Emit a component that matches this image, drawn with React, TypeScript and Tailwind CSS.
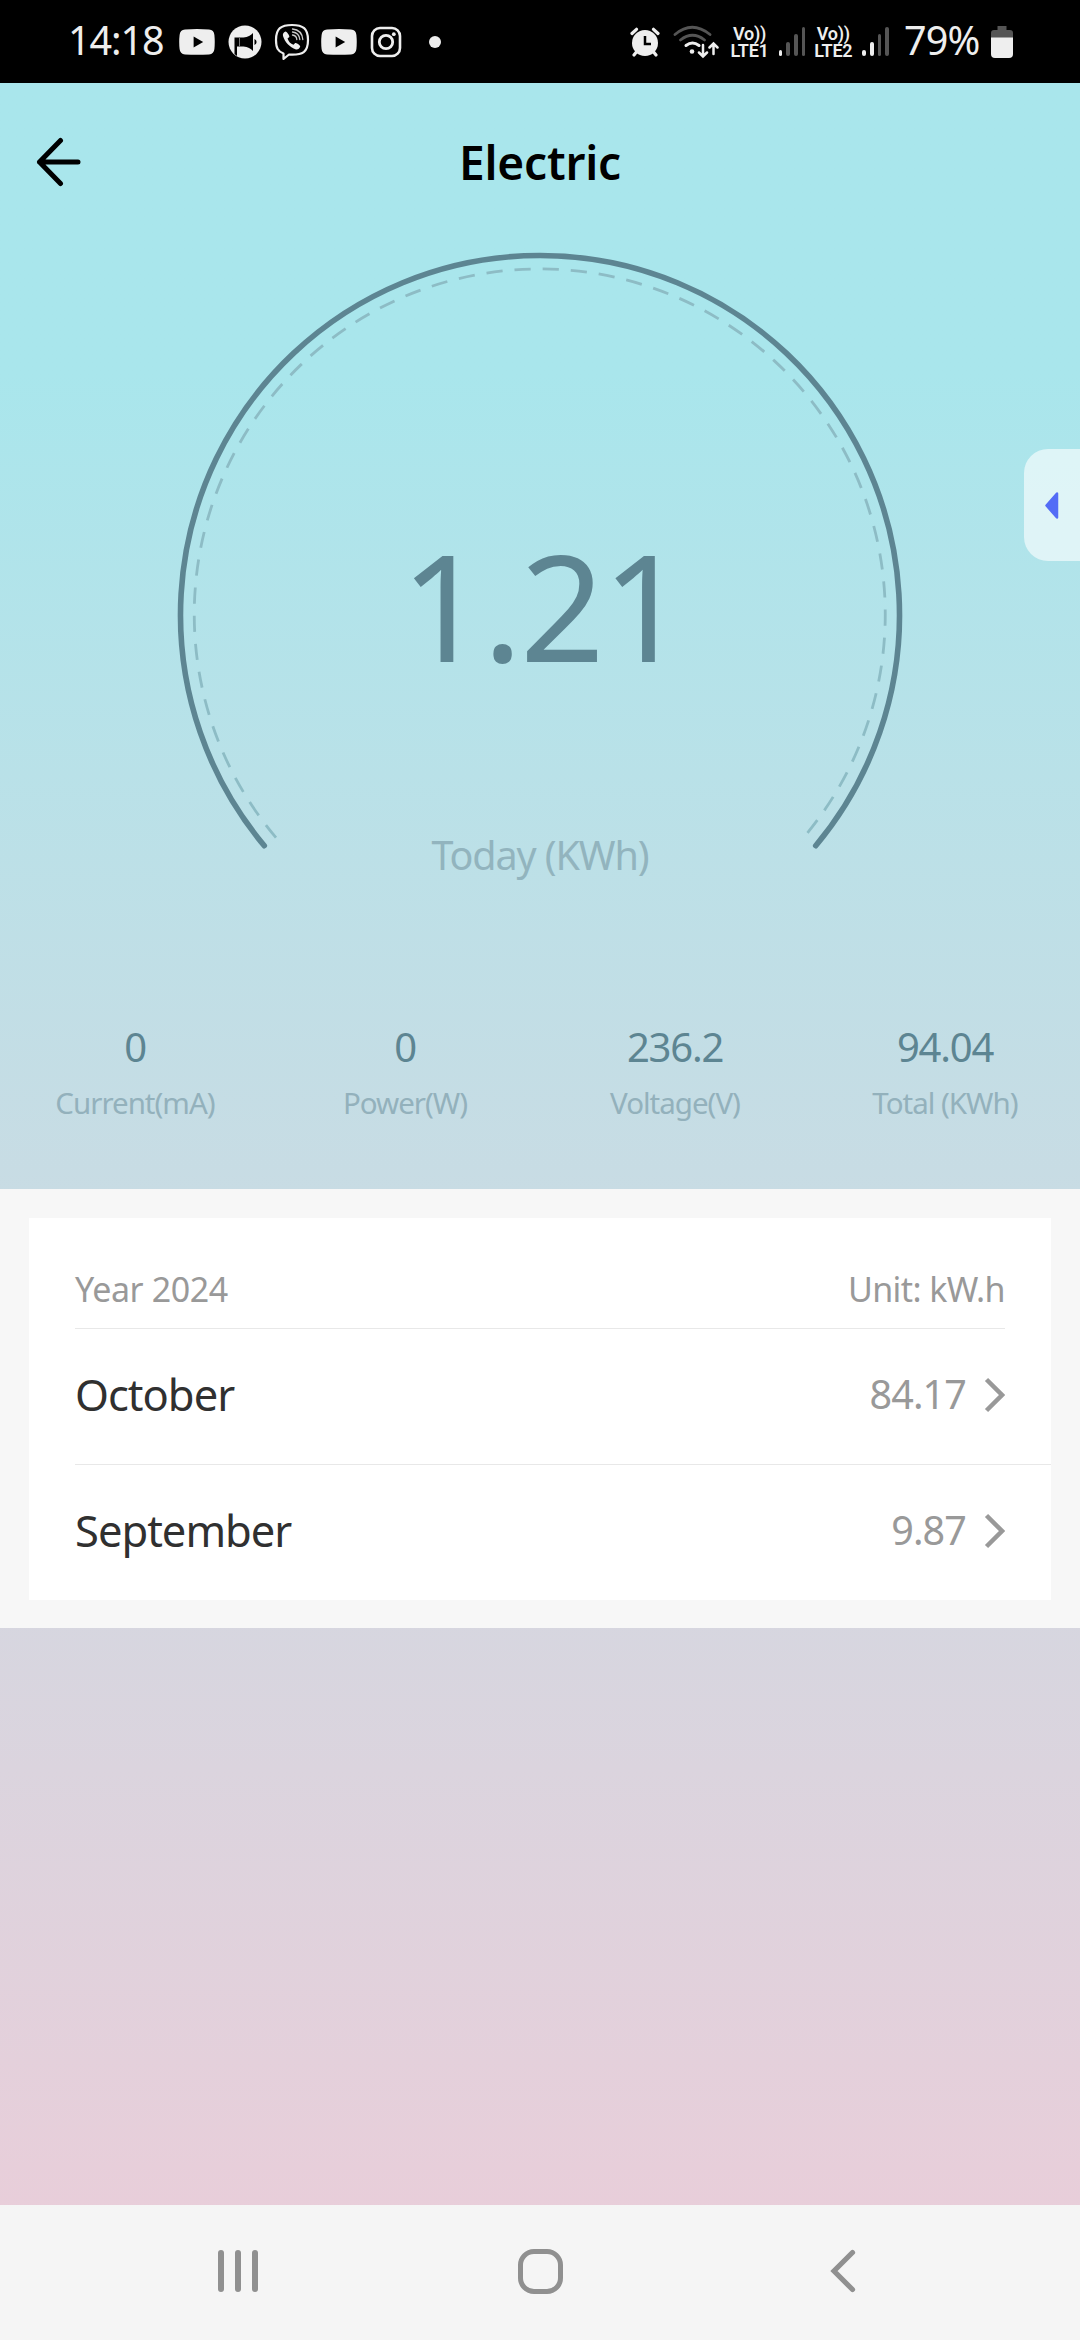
import type { ReactNode } from "react";

type Stat = { value: string; label: string };
type Month = { name: string; usage: string };

const STATS: Stat[] = [
  { value: "0", label: "Current(mA)" },
  { value: "0", label: "Power(W)" },
  { value: "236.2", label: "Voltage(V)" },
  { value: "94.04", label: "Total (KWh)" },
];

const MONTHS: Month[] = [
  { name: "October", usage: "84.17" },
  { name: "September", usage: "9.87" },
];

function YoutubeIcon({ className }: { className: string }) {
  return (
    <svg className={className} width="36" height="26" viewBox="0 0 36 26">
      <path
        d="M6 .6Q18-.4 30 .6 35 1 35.4 6q.7 7 0 14-.4 5-5.4 5.400-12 .8-24 0Q1 25 .6 20q-.8-7 0-14Q1 1 6 .6Z"
        fill="#eee"
      />
      <path d="M14.600 7.500v11l9.600-5.500Z" fill="#000" />
    </svg>
  );
}

function MegaphoneIcon() {
  return (
    <svg className="ml-[13px]" width="34" height="34" viewBox="0 0 34 34">
      <circle cx="17" cy="17" r="16.500" fill="#eee" />
      <path d="M6.500 12.500h9c4.500-.5 7-2 9.500-4.500v18c-2.500-2.500-5-4-9.500-4.500H9V31l-2.500-2Z" fill="#000" />
      <path d="M26.500 14a3.200 3.200 0 0 1 0 6Z" fill="#000" />
      <path d="M11.500 12.500v9" stroke="#777" strokeWidth="1" />
    </svg>
  );
}

function ViberIcon() {
  return (
    <svg className="ml-[12px]" width="36" height="38" viewBox="0 0 36 38" fill="none">
      <path
        d="M18 2C7 2 2 5.500 2 17c0 8 2 11.500 7.500 13.500V36l5.500-4.500c14 .8 19-2.500 19-14.500C34 5.500 29 2 18 2Z"
        stroke="#eee"
        strokeWidth="2.200"
        strokeLinejoin="round"
      />
      <path
        d="M11.500 8.500c-2 .8-3 2.500-2.500 4.500 2 6.500 6.500 11 13 13.500 2 .3 3.500-1 4.200-3 .2-1.200-4-4-5-3.500l-1.700 1.800c-3-1-5-3.300-6-6.300l1.800-1.500c.7-1-2.600-5.700-3.800-5.500Z"
        fill="#eee"
      />
      <path d="M18.500 12q4 .5 4.300 4.500M18.500 9q6.700.8 7.300 7.500M18.500 6q9.500 1 10.300 10.500" stroke="#ccc" strokeWidth="1.300" strokeLinecap="round" />
    </svg>
  );
}

function InstagramIcon() {
  return (
    <svg className="ml-[13px]" width="32" height="32" viewBox="0 0 32 32" fill="none" stroke="#eee">
      <rect x="2" y="2" width="28" height="28" rx="8" strokeWidth="2.600" />
      <circle cx="16" cy="16" r="6.700" strokeWidth="2.800" />
      <circle cx="23.800" cy="8.200" r="1.900" fill="#eee" stroke="none" />
    </svg>
  );
}

function AlarmIcon() {
  return (
    <svg width="30" height="30" viewBox="0 0 30 30">
      <path d="M2 6.500 6.500 2.300M28 6.500 23.500 2.300" stroke="#eee" strokeWidth="3.200" strokeLinecap="round" />
      <path d="m4 28 4-5M26 28l-4-5" stroke="#eee" strokeWidth="3.200" strokeLinecap="round" />
      <circle cx="15" cy="16" r="13" fill="#eee" />
      <path d="M15 9v8h6" stroke="#000" strokeWidth="2.500" fill="none" />
    </svg>
  );
}

function WifiIcon() {
  return (
    <svg className="ml-[13px]" width="46" height="34" viewBox="0 0 46 34" fill="none" strokeLinecap="round">
      <path d="M2 9.500q17-14.500 35 0M7.500 15q12-9.500 24 0" stroke="#555" strokeWidth="2.800" />
      <path d="M13 20.500q6.500-5 13 0" stroke="#eee" strokeWidth="3" />
      <circle cx="19" cy="26.500" r="2.300" fill="#eee" />
      <path d="M30 20v11M26 27.500l4 4 4-4M40.500 29V19M36.500 22.500l4-4 4 4" stroke="#eee" strokeWidth="2.500" />
    </svg>
  );
}

function VolteLabel({ sim }: { sim: number }) {
  return (
    <div className="w-[42px] whitespace-pre text-center font-[Roboto,sans-serif] text-[18px] font-semibold leading-[17px] tracking-[-0.3px] text-[#eee]">
      {`Vo))\nLTE${sim}`}
    </div>
  );
}

function SignalIcon({ bars }: { bars: number }) {
  const heights = [6, 14, 22, 29];
  return (
    <div className="flex h-[29px] items-end gap-[4px]">
      {heights.map((height, i) => (
        <div
          key={height}
          className={i < bars ? "w-[3.7px] rounded-full bg-[#eee]" : "w-[3.7px] rounded-full bg-[#555]"}
          style={{ height }}
        />
      ))}
    </div>
  );
}

function BatteryIcon() {
  return (
    <svg className="ml-[8px]" width="22" height="32" viewBox="0 0 22 32">
      <path d="M6.500 0h9v4H19q3 0 3 3v5H0V7q0-3 3-3h3.500Z" fill="#555" />
      <path d="M0 11.500h22V28q0 4-4 4H4q-4 0-4-4Z" fill="#eee" />
    </svg>
  );
}

function StatusBar() {
  return (
    <div className="flex h-[83px] shrink-0 items-center bg-black pl-[68px] pr-[67px] text-[#eee]">
      <span className="w-[110px] pb-px text-[39.500px] tracking-[-1.100px]">14:18</span>
      <YoutubeIcon className="ml-px" />
      <MegaphoneIcon />
      <ViberIcon />
      <YoutubeIcon className="ml-[11px]" />
      <InstagramIcon />
      <div className="ml-[27px] size-3 rounded-full bg-[#eee]" />
      <div className="ml-auto flex items-center">
        <AlarmIcon />
        <WifiIcon />
        <div className="ml-[10px] flex items-center gap-[8px]">
          <VolteLabel sim={1} />
          <SignalIcon bars={1} />
        </div>
        <div className="ml-[7px] flex items-center gap-[8px]">
          <VolteLabel sim={2} />
          <SignalIcon bars={2} />
        </div>
        <span className="ml-[15px] w-[79px] pb-px text-[39.500px] tracking-[-0.800px]">79%</span>
        <BatteryIcon />
      </div>
    </div>
  );
}

function Header() {
  return (
    <div className="grid h-[157px] shrink-0 grid-cols-3 items-center pl-9 pr-9">
      <svg width="46" height="50" viewBox="0 0 46 50" fill="none" stroke="#000" strokeWidth="5" strokeLinecap="round" strokeLinejoin="round">
        <path d="M24.500 3.500 3.500 25l21 21.500M3.500 25H42" />
      </svg>
      <h1 className="pt-[2px] text-center text-[46px] font-semibold tracking-[-0.2px] text-black">Electric</h1>
    </div>
  );
}

function Gauge({ children }: { children: ReactNode }) {
  return (
    <div className="relative mx-auto h-[620px] w-[740px] shrink-0">
      <svg width="740" height="620" viewBox="0 0 740 620" fill="none" strokeLinecap="round">
        <path d="M94.300 605.700A359.500 359.500 0 1 1 645.700 605.700" stroke="#5d8592" strokeWidth="5.600" />
        <path
          d="M106 597.600A345.500 345.500 0 1 1 637.500 592.800"
          stroke="#8dbcc5"
          strokeWidth="2.800"
          strokeLinecap="butt"
          strokeDasharray="16.200 11.940"
        />
      </svg>
      {children}
    </div>
  );
}

function StatCell({ value, label }: Stat) {
  return (
    <div className="flex flex-col items-center">
      <span className="text-[40px] leading-[56px] tracking-[-1.200px] text-[#5d8592]">{value}</span>
      <span className="text-[29.500px] leading-[56px] tracking-[-1.000px] text-[#93b1bc]">{label}</span>
    </div>
  );
}

function MonthRow({ name, usage }: Month) {
  return (
    <li className="ml-[46px] flex h-[136px] items-center border-[#e8e8e8] pb-[3px] pr-[46px] not-last:border-b last:h-[135px]">
      <span className="text-[43.500px] tracking-[-1.000px] text-[#303030]">{name}</span>
      <span className="ml-auto text-[39.500px] tracking-[-0.9px] text-[#999]">{usage}</span>
      <svg className="ml-[17px]" width="22" height="36" viewBox="0 0 22 36" fill="none" stroke="#999" strokeWidth="4.500">
        <path d="m3.500 2.500 15.500 15.500L3.500 33.500" />
      </svg>
    </li>
  );
}

function NavBar() {
  return (
    <div className="flex h-[135px] shrink-0 items-center justify-between bg-[#f5f5f5] pb-[3px] pl-[218px] pr-[223px]">
      <div className="flex gap-[11.200px]">
        <div className="h-[42px] w-[6px] rounded-full bg-[#909090]" />
        <div className="h-[42px] w-[6px] rounded-full bg-[#909090]" />
        <div className="h-[42px] w-[6px] rounded-full bg-[#909090]" />
      </div>
      <div className="ml-[-7px] size-[45px] rounded-[16px] border-[5.500px] border-[#909090]" />
      <svg width="28" height="44" viewBox="0 0 28 44" fill="none" stroke="#909090" strokeWidth="5.200" strokeLinecap="round">
        <path d="M23.500 3.500 5 22l18.500 18.500" />
      </svg>
    </div>
  );
}

export default function App() {
  return (
    <div className="relative flex h-[2340px] w-[1080px] flex-col overflow-hidden bg-linear-to-b from-[#a9e6ec] from-16% to-[#eacdd9] to-97% font-['Noto_Sans',sans-serif]">
      <StatusBar />
      <Header />
      <Gauge>
        <div className="absolute inset-x-0 top-[265px] pl-[5px] text-center text-[148px] leading-[200px] tracking-[-2.500px] text-[#5d8592]">
          1.21
        </div>
        <div className="absolute inset-x-0 top-[587px] text-center text-[39.500px] leading-[56px] tracking-[-1.100px] text-[#92b4be]">
          Today (KWh)
        </div>
      </Gauge>
      <div className="mt-[159px] grid h-[170px] shrink-0 grid-cols-4">
        {STATS.map((stat) => (
          <StatCell key={stat.label} {...stat} />
        ))}
      </div>
      <section className="shrink-0 bg-[#f7f7f7] px-[29px] pb-[28px] pt-[29px]">
        <div className="bg-white">
          <div className="mx-[46px] flex h-[111px] items-end justify-between border-b border-[#e8e8e8] pb-[15px] text-[34px] leading-[48px] text-[#999]">
            <span className="tracking-[-0.4px]">Year 2024</span>
            <span className="tracking-[-0.6px]">Unit: kW.h</span>
          </div>
          <ul>
            {MONTHS.map((month) => (
              <MonthRow key={month.name} {...month} />
            ))}
          </ul>
        </div>
      </section>
      <div className="grow" />
      <NavBar />
      <div className="absolute right-0 top-[449px] flex h-[112px] w-[56px] items-center rounded-l-[24px] bg-white/60 pl-[21px]">
        <svg width="14" height="27" viewBox="0 0 14 27">
          <path d="M12 1.500v24L1.500 13.500Z" fill="#536cf6" stroke="#536cf6" strokeWidth="2.500" strokeLinejoin="round" />
        </svg>
      </div>
    </div>
  );
}
